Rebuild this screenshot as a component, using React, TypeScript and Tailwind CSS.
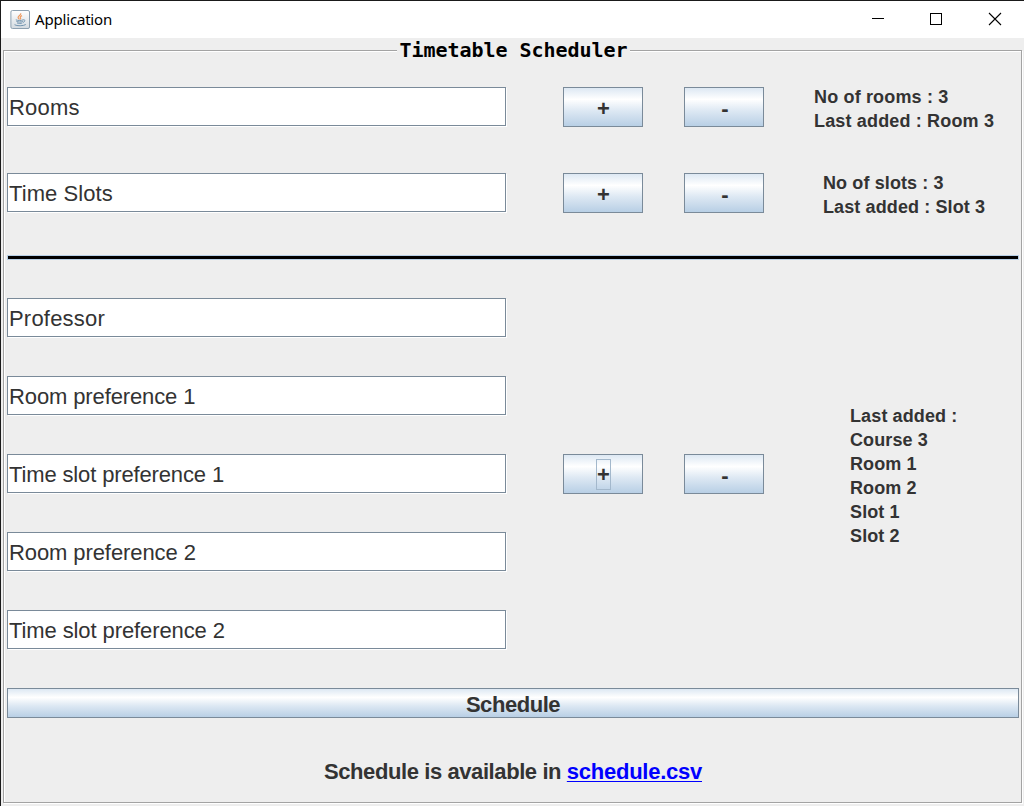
import React from "react";

const metal =
  "border border-[#7a8a99] bg-[linear-gradient(to_bottom,#dde8f3_0%,#ffffff_30%,#dde8f3_60%,#b8cfe5_100%)] font-bold text-[#333333] flex items-center justify-center";

function Field({ label, tracking }: { label: string; tracking: string }) {
  return (
    <input
      defaultValue={label}
      className={`block h-[39px] w-[499px] shrink-0 border border-[#7a8a99] bg-white pl-[1px] pt-[2px] text-[22px] text-[#333333] shadow-[1px_1px_0_#ffffff] outline-none ${tracking}`}
    />
  );
}

function PlusMinus({ focused = false }: { focused?: boolean }) {
  return (
    <div className="ml-[57px] flex gap-[41px] text-[22px]">
      <button className={`${metal} h-10 w-20`}>
        <span
          className={`mt-[1px] flex h-[31px] w-[15px] items-center justify-center border pl-[1px] pt-[1px] ${
            focused ? "border-[#a3b8cc]" : "border-transparent"
          }`}
        >
          +
        </span>
      </button>
      <button className={`${metal} h-10 w-20 pl-[2px] pt-[3px]`}>-</button>
    </div>
  );
}

function Info({ lines, className }: { lines: string[]; className: string }) {
  return (
    <div className={`text-[18px] font-bold leading-6 text-[#333333] whitespace-nowrap ${className}`}>
      {lines.map((line) => (
        <div key={line}>{line}</div>
      ))}
    </div>
  );
}

function JavaIcon() {
  return (
    <svg width="20" height="20" viewBox="0 0 20 20" fill="none">
      <defs>
        <linearGradient id="tile" x1="0" y1="0" x2="0" y2="1">
          <stop offset="0" stopColor="#ffffff" />
          <stop offset="1" stopColor="#d3dae0" />
        </linearGradient>
      </defs>
      <rect x="0.9" y="0.5" width="18.6" height="18" rx="1.5" fill="url(#tile)" stroke="#8da0b0" />
      <path d="M10.7 3.2c.8 2-3 2.4-2.6 4.4.2.8 1 1.1 1.3 1.8M12 5.6c-1.8.8-2.2 1.5-1.5 2.3.4.6.2 1-.3 1.5" stroke="#ee9a60" strokeWidth="1.2" />
      <path d="M5.8 9.8c1.6.9 5.8.9 7.4 0M6.4 11.4c2 .8 4.6.8 6.4 0M7 12.9c1.6.7 3.8.7 5.4 0M13.2 9.8c2.4-.4 2.1 2-.2 2.6" stroke="#7395b0" strokeWidth="1" />
      <path d="M4.5 14.7c2.3 1.5 9 1.4 11.3-.2" stroke="#7395b0" strokeWidth="1" />
    </svg>
  );
}

function TitleBar() {
  return (
    <header className="flex h-[37px] items-center bg-white pl-[9px] text-black">
      <JavaIcon />
      <span className="ml-[5px] -mt-[1px] font-['Noto_Sans',sans-serif] text-[15px] leading-5 tracking-[-0.18px]">Application</span>
      <svg className="ml-auto" width="165" height="37" viewBox="0 0 165 37" fill="none" stroke="#000" shapeRendering="crispEdges">
        <path d="M13 17.5h12" />
        <rect x="71.5" y="12.5" width="11" height="11" />
        <path d="M130 12l12 12M142 12l-12 12" shapeRendering="auto" strokeWidth="1.1" />
      </svg>
    </header>
  );
}

const preferences = [
  { label: "Professor", tracking: "tracking-[0.2px]" },
  { label: "Room preference 1", tracking: "tracking-[-0.12px]" },
  { label: "Time slot preference 1", tracking: "tracking-[-0.14px]" },
  { label: "Room preference 2", tracking: "tracking-[-0.09px]" },
  { label: "Time slot preference 2", tracking: "tracking-[-0.1px]" },
];

export default function App() {
  return (
    <div className="h-[806px] w-[1024px] overflow-hidden border-l border-t border-[#1a1a1a] bg-[#eeeeee] font-['Liberation_Sans',Arial,sans-serif]">
      <TitleBar />
      <main className="ml-[2px] mt-[12px] h-[753px] w-[1019px] border border-[#a3a3a3] shadow-[1px_1px_0_#ffffff,inset_1px_1px_0_#ffffff]">
        <div className="-mt-[13px] flex h-6 justify-center pl-[2px]">
          <h1 className="bg-[#eeeeee] px-[2px] font-['DejaVu_Sans_Mono',monospace] text-[20px] font-bold leading-6 tracking-[-0.04px] text-black">
            Timetable Scheduler
          </h1>
        </div>
        <div className="ml-[3px] w-[1012px]">
          <div className="mt-[25px] flex h-10 items-start">
            <Field label="Rooms" tracking="tracking-[0.2px]" />
            <PlusMinus />
            <Info className="-mt-[2px] ml-[50px] tracking-[0.16px]" lines={["No of rooms : 3", "Last added : Room 3"]} />
          </div>
          <div className="mt-[46px] flex h-10 items-start">
            <Field label="Time Slots" tracking="tracking-[0.08px]" />
            <PlusMinus />
            <Info className="-mt-[2px] ml-[59px] tracking-[0.11px]" lines={["No of slots : 3", "Last added : Slot 3"]} />
          </div>
          <div className="mt-[42px] h-[5px] border border-[#b8cfe5] bg-black" />
          <div className="mt-[38px] flex h-[351px] items-center">
            <div className="flex flex-col gap-[39px]">
              {preferences.map((field) => (
                <Field key={field.label} {...field} />
              ))}
            </div>
            <PlusMinus focused />
            <Info
              className="ml-[86px] mt-[5px] tracking-[0.12px]"
              lines={["Last added :", "Course 3", "Room 1", "Room 2", "Slot 1", "Slot 2"]}
            />
          </div>
          <button className={`${metal} mt-[39px] h-[30px] w-full pt-[3px] text-[22px] leading-6 tracking-[-0.45px]`}>Schedule</button>
          <p className="mt-[41px] text-center text-[22px] font-bold leading-[26px] tracking-[-0.41px] text-[#333333]">
            Schedule is available in{" "}
            <a
              href="#"
              className="tracking-[-0.25px] text-[#0000ff] underline decoration-1 underline-offset-2 [text-decoration-skip-ink:none]"
            >
              schedule.csv
            </a>
          </p>
        </div>
      </main>
    </div>
  );
}
